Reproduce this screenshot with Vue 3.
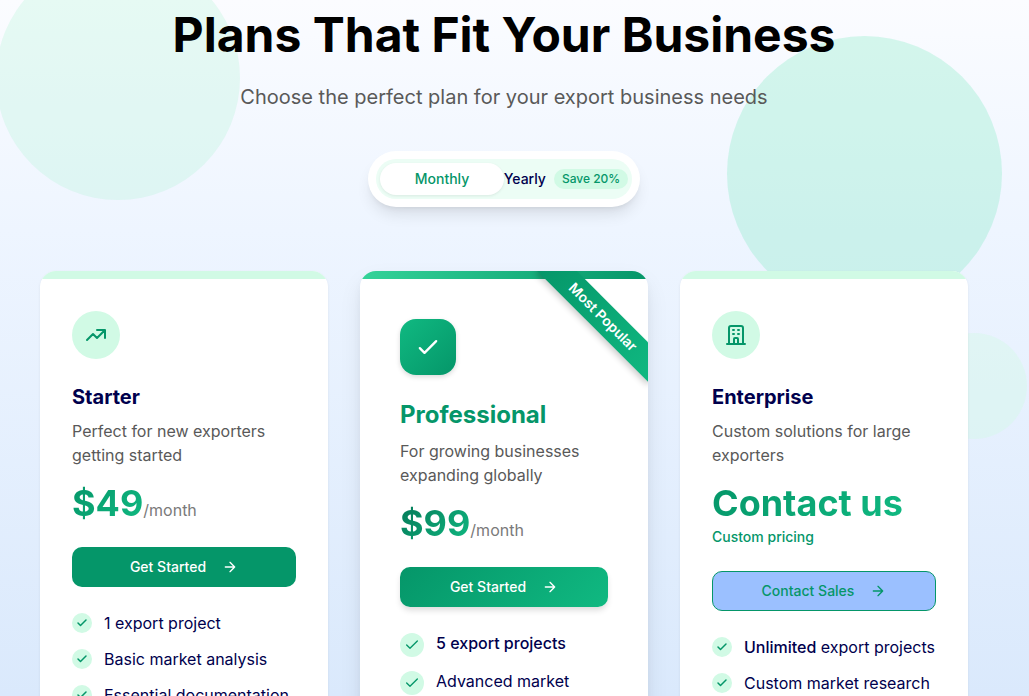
<script setup>
import { ref } from 'vue'

const billing = ref('monthly')

const plans = [
  {
    name: 'Starter',
    text: 'Perfect for new exporters getting started',
    price: '$49',
    unit: '/month',
    action: 'Get Started',
    kind: 'starter',
    icon: 'M13 7h8m0 0v8m0-8l-8 8-4-4-6 6',
    features: [
      { text: '1 export project' },
      { text: 'Basic market analysis' },
      { text: 'Essential documentation' }
    ]
  },
  {
    name: 'Professional',
    text: 'For growing businesses expanding globally',
    price: '$99',
    unit: '/month',
    action: 'Get Started',
    kind: 'pro',
    badge: 'Most Popular',
    icon: 'M5 13l4 4L19 7',
    features: [
      { strong: '5 export projects' },
      { text: 'Advanced market' }
    ]
  },
  {
    name: 'Enterprise',
    text: 'Custom solutions for large exporters',
    price: 'Contact us',
    note: 'Custom pricing',
    action: 'Contact Sales',
    kind: 'enterprise',
    icon: 'M19 21V5a2 2 0 00-2-2H7a2 2 0 00-2 2v16m14 0h2m-2 0h-5m-9 0H3m2 0h5M9 7h1m-1 4h1m4-4h1m-1 4h1m-5 10v-5a1 1 0 011-1h2a1 1 0 011 1v5m-4 0h4',
    features: [
      { strong: 'Unlimited', text: ' export projects' },
      { text: 'Custom market research' }
    ]
  }
]
</script>

<template>
  <main class="pricing">
    <span class="blob blob-left"></span>
    <span class="blob blob-right"></span>
    <span class="blob blob-small"></span>

    <header class="intro">
      <h1>Plans That Fit Your Business</h1>
      <p>Choose the perfect plan for your export business needs</p>
    </header>

    <div class="switch">
      <div class="switch-track">
        <button
          type="button"
          :class="{ active: billing === 'monthly' }"
          :aria-pressed="billing === 'monthly'"
          @click="billing = 'monthly'"
        >Monthly</button>
        <button
          type="button"
          :class="{ active: billing === 'yearly' }"
          :aria-pressed="billing === 'yearly'"
          @click="billing = 'yearly'"
        >Yearly<span class="save">Save 20%</span></button>
      </div>
    </div>

    <section class="plans">
      <article v-for="plan in plans" :key="plan.name" class="card" :class="plan.kind">
        <div class="stripe"></div>
        <div v-if="plan.badge" class="ribbon">{{ plan.badge }}</div>
        <div class="body">
          <div class="icon">
            <svg viewBox="0 0 24 24" aria-hidden="true"><path :d="plan.icon" /></svg>
          </div>
          <h2>{{ plan.name }}</h2>
          <p class="text">{{ plan.text }}</p>
          <div class="price">
            <span class="amount">{{ plan.price }}</span><span v-if="plan.unit" class="unit">{{ plan.unit }}</span>
          </div>
          <p v-if="plan.note" class="note">{{ plan.note }}</p>
          <button type="button" class="action">
            {{ plan.action }}
            <svg viewBox="0 0 24 24" aria-hidden="true"><path d="M5 12h14M12 5l7 7-7 7" /></svg>
          </button>
          <ul>
            <li v-for="(feature, i) in plan.features" :key="i">
              <span class="tick">
                <svg viewBox="0 0 24 24" aria-hidden="true"><path d="M20 6L9 17l-5-5" /></svg>
              </span>
              <span><strong v-if="feature.strong">{{ feature.strong }}</strong>{{ feature.text }}</span>
            </li>
          </ul>
        </div>
      </article>
    </section>
  </main>
</template>

<style>
body {
  margin: 0;
}
</style>

<style scoped>
* {
  box-sizing: border-box;
}

.pricing {
  position: relative;
  display: flex;
  flex-direction: column;
  height: 100vh;
  overflow: hidden;
  padding: 5px 61px 0 40px;
  font-family: Inter, "Liberation Sans", sans-serif;
  font-size: 16px;
  line-height: 24px;
  color: #00004d;
  background: linear-gradient(180deg, #fbfcff 0%, #eef5ff 33%, #dae9fc 100%);
}

h1, h2, p, ul {
  margin: 0;
  padding: 0;
}

button {
  font-family: inherit;
  font-size: 14px;
  line-height: 20px;
  font-weight: 500;
  border: 0;
  padding: 0;
  cursor: pointer;
}

svg {
  display: block;
  fill: none;
  stroke: currentColor;
  stroke-width: 2;
  stroke-linecap: round;
  stroke-linejoin: round;
}

.blob {
  position: absolute;
  border-radius: 50%;
}

.blob-left {
  left: -4px;
  top: -44px;
  width: 244px;
  height: 244px;
  background: rgba(167, 243, 208, 0.25);
}

.blob-right {
  right: 27px;
  top: 36px;
  width: 275px;
  height: 275px;
  background: rgba(110, 231, 183, 0.27);
}

.blob-small {
  right: 2px;
  top: 333px;
  width: 106px;
  height: 106px;
  background: rgba(209, 250, 229, 0.4);
}

.intro {
  position: relative;
  text-align: center;
}

h1 {
  font-size: 48px;
  line-height: 60px;
  font-weight: 700;
  color: #000;
}

.intro p {
  margin-top: 18px;
  font-size: 20px;
  line-height: 28px;
  color: #595959;
}

.switch {
  position: relative;
  align-self: center;
  margin-top: 40px;
  padding: 8px;
  border-radius: 28px;
  background: #fff;
  box-shadow: 0 10px 15px -3px rgba(0, 0, 0, 0.1), 0 4px 6px -4px rgba(0, 0, 0, 0.1);
}

.switch-track {
  display: grid;
  grid-template-columns: 124px 124px;
  padding: 4px;
  border-radius: 20px;
  background: #ecfdf5;
}

.switch button {
  display: flex;
  align-items: center;
  justify-content: center;
  gap: 8px;
  height: 32px;
  border-radius: 16px;
  white-space: nowrap;
  color: #00004d;
  background: transparent;
}

.switch button.active {
  color: #059669;
  background: #fff;
  box-shadow: 0 1px 3px rgba(0, 0, 0, 0.08);
}

.save {
  padding: 2px 8px;
  border-radius: 10px;
  font-size: 12px;
  line-height: 16px;
  color: #059669;
  background: #d1fae5;
}

.plans {
  position: relative;
  flex: 1;
  display: grid;
  grid-template-columns: repeat(3, 1fr);
  gap: 32px;
  margin-top: 64px;
}

.card {
  position: relative;
  overflow: hidden;
  border-radius: 16px 16px 0 0;
  background: #fff;
  box-shadow: 0 1px 3px rgba(0, 0, 0, 0.07);
}

.stripe {
  height: 8px;
  background: #d1fae5;
}

.body {
  padding: 32px;
}

.icon {
  display: flex;
  align-items: center;
  justify-content: center;
  width: 48px;
  height: 48px;
  border-radius: 50%;
  color: #059669;
  background: #d1fae5;
}

.icon svg {
  width: 24px;
  height: 24px;
}

h2 {
  margin-top: 24px;
  font-size: 20px;
  line-height: 28px;
  font-weight: 700;
}

.text {
  margin-top: 8px;
  color: #595959;
}

.price {
  display: flex;
  align-items: baseline;
  margin-top: 16px;
  line-height: 40px;
}

.amount {
  font-size: 36px;
  font-weight: 700;
  color: transparent;
  background: linear-gradient(135deg, #059669, #10b981);
  background-clip: text;
}

.unit {
  line-height: 24px;
  color: #7a7a7a;
}

.note {
  margin-top: 4px;
  font-size: 14px;
  line-height: 20px;
  font-weight: 500;
  color: #059669;
}

.action {
  display: flex;
  align-items: center;
  justify-content: center;
  gap: 16px;
  width: 100%;
  height: 40px;
  margin-top: 24px;
  border-radius: 10px;
  color: #fff;
  background: #059669;
}

.action svg {
  width: 16px;
  height: 16px;
}

ul {
  display: grid;
  gap: 12px;
  margin-top: 24px;
  list-style: none;
}

li {
  display: flex;
  gap: 12px;
  white-space: nowrap;
}

strong {
  font-weight: 500;
}

.tick {
  display: flex;
  flex: none;
  align-items: center;
  justify-content: center;
  width: 20px;
  height: 20px;
  margin-top: 2px;
  border-radius: 50%;
  color: #059669;
  background: #d1fae5;
}

.tick svg {
  width: 12px;
  height: 12px;
  stroke-width: 3;
}

.pro {
  box-shadow: 0 10px 25px -3px rgba(0, 0, 0, 0.1), 0 4px 10px -2px rgba(0, 0, 0, 0.06);
}

.pro .stripe {
  background: linear-gradient(90deg, #34d399, #059669);
}

.pro .body {
  padding: 40px;
}

.pro .icon {
  width: 56px;
  height: 56px;
  border-radius: 16px;
  color: #fff;
  background: linear-gradient(135deg, #10b981, #059669);
  box-shadow: 0 2px 5px rgba(0, 0, 0, 0.15);
}

.pro .icon svg {
  width: 28px;
  height: 28px;
}

.pro h2 {
  font-size: 24px;
  line-height: 32px;
  color: #059669;
}

.pro .amount {
  background: linear-gradient(135deg, #047857, #10b981);
  background-clip: text;
}

.pro .action {
  background: linear-gradient(135deg, #059669, #10b981);
  box-shadow: 0 4px 6px -1px rgba(0, 0, 0, 0.15);
}

.pro .tick {
  width: 24px;
  height: 24px;
}

.pro .tick svg {
  width: 16px;
  height: 16px;
  stroke-width: 2;
}

.ribbon {
  position: absolute;
  top: 32px;
  right: -35px;
  width: 160px;
  padding: 4px 0;
  font-size: 14px;
  line-height: 20px;
  font-weight: 600;
  text-align: center;
  color: #fff;
  background: linear-gradient(90deg, #059669, #10b981);
  box-shadow: 0 4px 6px -1px rgba(0, 0, 0, 0.2);
  transform: rotate(45deg);
}

.enterprise .action {
  border: 1px solid #059669;
  color: #059669;
  background: #9bc0ff;
}
</style>
